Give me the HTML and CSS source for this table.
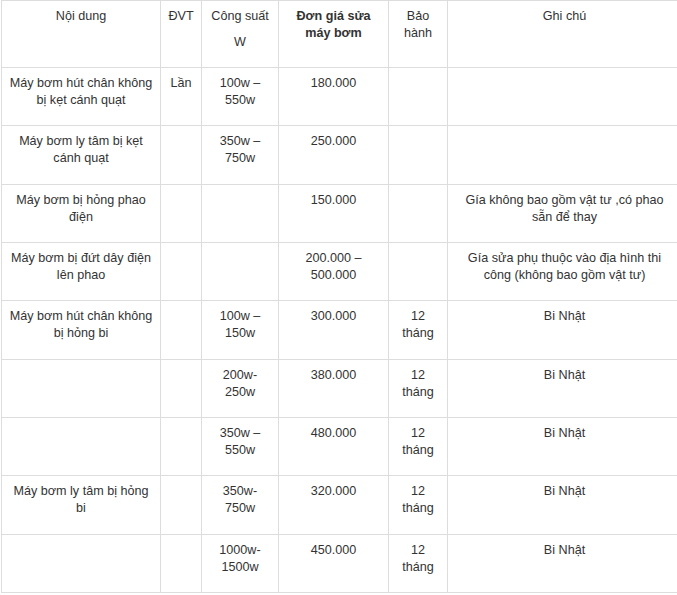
FILE: index.html
```html
<!DOCTYPE html>
<html lang="vi">
<head>
<meta charset="utf-8">
<title>Bảng giá sửa máy bơm</title>
<link rel="stylesheet" href="styles.css">
</head>
<body>
<table class="price-table">
  <colgroup>
    <col class="c1"><col class="c2"><col class="c3"><col class="c4"><col class="c5"><col class="c6">
  </colgroup>
  <thead>
    <tr class="head">
      <td>Nội dung</td>
      <td>ĐVT</td>
      <td>Công suất<span class="unit">W</span></td>
      <td class="bold">Đơn giá sửa<br>máy bơm</td>
      <td>Bảo<br>hành</td>
      <td>Ghi chú</td>
    </tr>
  </thead>
  <tbody>
    <tr>
      <td>Máy bơm hút chân không<br>bị kẹt cánh quạt</td>
      <td>Lần</td>
      <td>100w –<br>550w</td>
      <td>180.000</td>
      <td></td>
      <td></td>
    </tr>
    <tr>
      <td>Máy bơm ly tâm bị kẹt<br>cánh quạt</td>
      <td></td>
      <td>350w –<br>750w</td>
      <td>250.000</td>
      <td></td>
      <td></td>
    </tr>
    <tr>
      <td>Máy bơm bị hỏng phao<br>điện</td>
      <td></td>
      <td></td>
      <td>150.000</td>
      <td></td>
      <td>Gía không bao gồm vật tư ,có phao<br>sẵn để thay</td>
    </tr>
    <tr>
      <td>Máy bơm bị đứt dây điện<br>lên phao</td>
      <td></td>
      <td></td>
      <td>200.000 –<br>500.000</td>
      <td></td>
      <td>Gía sửa phụ thuộc vào địa hình thi<br>công (không bao gồm vật tư)</td>
    </tr>
    <tr>
      <td>Máy bơm hút chân không<br>bị hỏng bi</td>
      <td></td>
      <td>100w –<br>150w</td>
      <td>300.000</td>
      <td>12<br>tháng</td>
      <td>Bi Nhật</td>
    </tr>
    <tr>
      <td></td>
      <td></td>
      <td>200w-<br>250w</td>
      <td>380.000</td>
      <td>12<br>tháng</td>
      <td>Bi Nhật</td>
    </tr>
    <tr>
      <td></td>
      <td></td>
      <td>350w –<br>550w</td>
      <td>480.000</td>
      <td>12<br>tháng</td>
      <td>Bi Nhật</td>
    </tr>
    <tr>
      <td>Máy bơm ly tâm bị hỏng<br>bi</td>
      <td></td>
      <td>350w-<br>750w</td>
      <td>320.000</td>
      <td>12<br>tháng</td>
      <td>Bi Nhật</td>
    </tr>
    <tr>
      <td></td>
      <td></td>
      <td>1000w-<br>1500w</td>
      <td>450.000</td>
      <td>12<br>tháng</td>
      <td>Bi Nhật</td>
    </tr>
  </tbody>
</table>
</body>
</html>
```

FILE: styles.css
```css
html, body {
  margin: 0;
  padding: 0;
  background: #fff;
  overflow: hidden;
}

body {
  font-family: "Liberation Sans", Arial, sans-serif;
  font-size: 12.6px;
  line-height: 17px;
  color: #333;
  padding-left: 1px;
}

.price-table {
  border-collapse: collapse;
  table-layout: fixed;
  width: 680px;
}

.c1 { width: 159px; }
.c2 { width: 41px; }
.c3 { width: 77px; }
.c4 { width: 110px; }
.c5 { width: 59px; }
.c6 { width: 234px; }

.price-table td {
  border: 1px solid #ddd;
  padding: 7px 4px 0;
  text-align: center;
  vertical-align: top;
}

.price-table tr.head td {
  height: 59px;
}

.price-table tbody td {
  height: 50.33px;
}

.bold {
  font-weight: bold;
}

.unit {
  display: block;
  margin-top: 9px;
}
```
